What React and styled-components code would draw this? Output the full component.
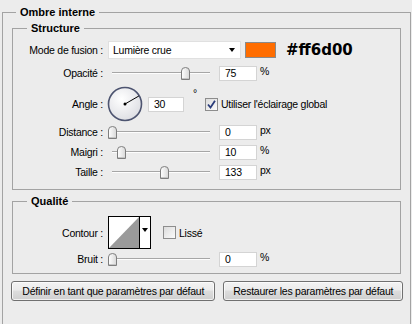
import React from 'react';
import styled, { createGlobalStyle } from 'styled-components';

const GlobalStyle = createGlobalStyle`
  html, body {
    margin: 0;
    padding: 0;
    background: #ececec;
    overflow: hidden;
  }
  body {
    font-family: "Liberation Sans", Arial, sans-serif;
    font-size: 10.5px;
    letter-spacing: -0.25px;
    color: #000;
  }
`;

const Box = styled.fieldset`
  margin: ${p => p.$outer ? '6px 1px 0 2px' : p.$gap ? `${p.$gap}px 0 0 0` : '0'};
  padding: ${p => p.$pad};
  border: 1px solid #a3a3a3;
  min-width: 0;
  min-height: ${p => p.$outer ? '320px' : '0'};
  box-sizing: border-box;
`;

const Legend = styled.legend`
  padding: 0 4px;
  margin-left: ${p => p.$indent}px;
  font-weight: bold;
  font-size: 11px;
  line-height: 13px;
  letter-spacing: 0;
`;

const Row = styled.div`
  display: flex;
  align-items: center;
  height: ${p => p.$h || 16}px;
  margin-bottom: ${p => p.$mb || 0}px;
`;

const Label = styled.div`
  width: 90px;
  margin-right: 5px;
  text-align: right;
  flex-shrink: 0;
`;

const Select = styled.div`
  width: 122px;
  height: 16px;
  background: #fff;
  border: 1px solid #e0e0e0;
  display: flex;
  align-items: center;
  justify-content: space-between;
  padding: 0 5px 0 4px;
  box-sizing: content-box;
`;

const Caret = styled.span`
  width: 0;
  height: 0;
  border-left: 3.5px solid transparent;
  border-right: 3.5px solid transparent;
  border-top: 4px solid #000;
`;

const Swatch = styled.div`
  width: 29px;
  height: 14px;
  margin-left: 4px;
  background: #ff6d00;
  border: 1px solid #8a8a8a;
`;

const Hex = styled.div`
  margin-left: 10px;
  font-family: "DejaVu Sans", sans-serif;
  font-weight: bold;
  font-size: 15px;
  letter-spacing: 0;
`;

const SliderWrap = styled.div`
  position: relative;
  width: 106px;
  height: 16px;
  flex-shrink: 0;
`;

const Track = styled.div`
  position: absolute;
  left: 4px;
  right: 4px;
  top: 7px;
  height: 0;
  border-top: 1px solid #a6a6a6;
  border-bottom: 1px solid #fdfdfd;
`;

const Thumb = styled.svg`
  position: absolute;
  top: 2px;
  width: 9px;
  height: 13px;
`;

const NumInput = styled.div`
  width: ${p => p.$w || 31}px;
  height: 13px;
  margin-left: ${p => p.$ml || 5}px;
  padding: 0 0 0 5px;
  background: #fff;
  border: 1px solid #d4d4d4;
  line-height: 13px;
`;

const Unit = styled.span`
  margin-left: 3px;
  align-self: flex-start;
  line-height: 13px;
`;

const Dial = styled.svg`
  width: 36px;
  height: 36px;
  margin-left: -1px;
  flex-shrink: 0;
`;

const CheckBox = styled.span`
  display: inline-flex;
  align-items: center;
  justify-content: center;
  width: 11px;
  height: 11px;
  border: 1px solid #8d8d8d;
  background: linear-gradient(135deg, #dcdcdc, #fbfbfb);
  margin-left: ${p => p.$ml}px;
  margin-right: 3px;
  flex-shrink: 0;
`;

const Degree = styled.span`
  margin-left: 9px;
  align-self: flex-start;
  line-height: 12px;
`;

const ContourBox = styled.div`
  display: flex;
  width: 41px;
  height: 31px;
  border: 1px solid #000;
  background: #fff;
`;

const ContourCurve = styled.svg`
  width: 30px;
  height: 31px;
  border-right: 1px solid #000;
`;

const ContourArrow = styled.div`
  flex: 1;
  display: flex;
  align-items: center;
  justify-content: center;
  padding-bottom: 6px;
`;

const Buttons = styled.div`
  display: flex;
  gap: 8px;
  margin: 7px -2px 0 -1px;
`;

const Button = styled.button`
  width: ${p => p.$w}px;
  height: 20px;
  padding: 0;
  border: 1px solid #707070;
  border-radius: 3px;
  background: linear-gradient(#f3f3f3, #ebebeb 45%, #dddddd 50%, #cfcfcf);
  font-family: inherit;
  font-size: 10.5px;
  letter-spacing: -0.25px;
  color: #000;
  box-shadow: inset 0 0 0 1px rgba(255, 255, 255, 0.7);
`;

function Slider({ value, max }) {
  const left = 4 + (value / max) * 98 - 4.5;
  return (
    <SliderWrap>
      <Track />
      <Thumb style={{ left }} viewBox="0 0 9 13">
        <defs>
          <linearGradient id="tg" x1="0" x2="1">
            <stop offset="0" stopColor="#ffffff" />
            <stop offset="1" stopColor="#d8d8d8" />
          </linearGradient>
        </defs>
        <path d="M0.5 12.5 V4 Q0.5 0.5 4.5 0.5 Q8.5 0.5 8.5 4 V12.5 Z" fill="url(#tg)" stroke="#7e7e7e" />
        <line x1="1" y1="11.5" x2="8" y2="11.5" stroke="#c4c4c4" />
      </Thumb>
    </SliderWrap>
  );
}

function SliderRow({ label, value, max, unit, mb }) {
  return (
    <Row $mb={mb}>
      <Label>{label}</Label>
      <Slider value={value} max={max} />
      <NumInput>{value}</NumInput>
      <Unit>{unit}</Unit>
    </Row>
  );
}

const Tick = () => (
  <svg width="9" height="9" viewBox="0 0 9 9">
    <path d="M1 4.5 L3.5 7.5 L8 0.8" fill="none" stroke="#2a3c7a" strokeWidth="1.8" />
  </svg>
);

export default function App() {
  const rad = (30 * Math.PI) / 180;
  return (
    <>
      <GlobalStyle />
      <Box $outer $pad="3px 9px 0 9px">
        <Legend $indent={4}>Ombre interne</Legend>

        <Box $pad="6px 0 9px 0">
          <Legend $indent={14}>Structure</Legend>
          <Row $h={18} $mb={6}>
            <Label>Mode de fusion :</Label>
            <Select>
              <span>Lumière crue</span>
              <Caret />
            </Select>
            <Swatch />
            <Hex>#ff6d00</Hex>
          </Row>
          <SliderRow label="Opacité :" value={75} max={100} unit="%" mb={6} />
          <Row $h={34} $mb={3}>
            <Label>Angle :</Label>
            <Dial viewBox="0 0 36 36">
              <defs>
                <radialGradient id="dg" cx="0.4" cy="0.35" r="0.7">
                  <stop offset="0" stopColor="#ffffff" />
                  <stop offset="1" stopColor="#dcdde2" />
                </radialGradient>
              </defs>
              <circle cx="18" cy="18" r="16.5" fill="url(#dg)" stroke="#4d5470" strokeWidth="1.6" />
              <line
                x1="18"
                y1="18"
                x2={18 + 16 * Math.cos(rad)}
                y2={18 - 16 * Math.sin(rad)}
                stroke="#000"
                strokeWidth="1"
              />
              <circle cx="18" cy="18" r="1.5" fill="#000" />
            </Dial>
            <NumInput $ml={5} $w={29}>30</NumInput>
            <Degree>°</Degree>
            <CheckBox $ml={8}>
              <Tick />
            </CheckBox>
            <span>Utiliser l'éclairage global</span>
          </Row>
          <SliderRow label="Distance :" value={0} max={100} unit="px" mb={4} />
          <SliderRow label="Maigri :" value={10} max={100} unit="%" mb={4} />
          <SliderRow label="Taille :" value={133} max={250} unit="px" />
        </Box>

        <Box $gap={5} $pad="8px 0 6px 0">
          <Legend $indent={14}>Qualité</Legend>
          <Row $h={33} $mb={2}>
            <Label>Contour :</Label>
            <ContourBox>
              <ContourCurve viewBox="0 0 30 31">
                <path d="M0 31 L30 0 L30 31 Z" fill="#9a9a9a" />
              </ContourCurve>
              <ContourArrow>
                <Caret />
              </ContourArrow>
            </ContourBox>
            <CheckBox $ml={12} />
            <span>Lissé</span>
          </Row>
          <SliderRow label="Bruit :" value={0} max={100} unit="%" />
        </Box>

        <Buttons>
          <Button $w={205}>Définir en tant que paramètres par défaut</Button>
          <Button $w={180}>Restaurer les paramètres par défaut</Button>
        </Buttons>
      </Box>
    </>
  );
}
